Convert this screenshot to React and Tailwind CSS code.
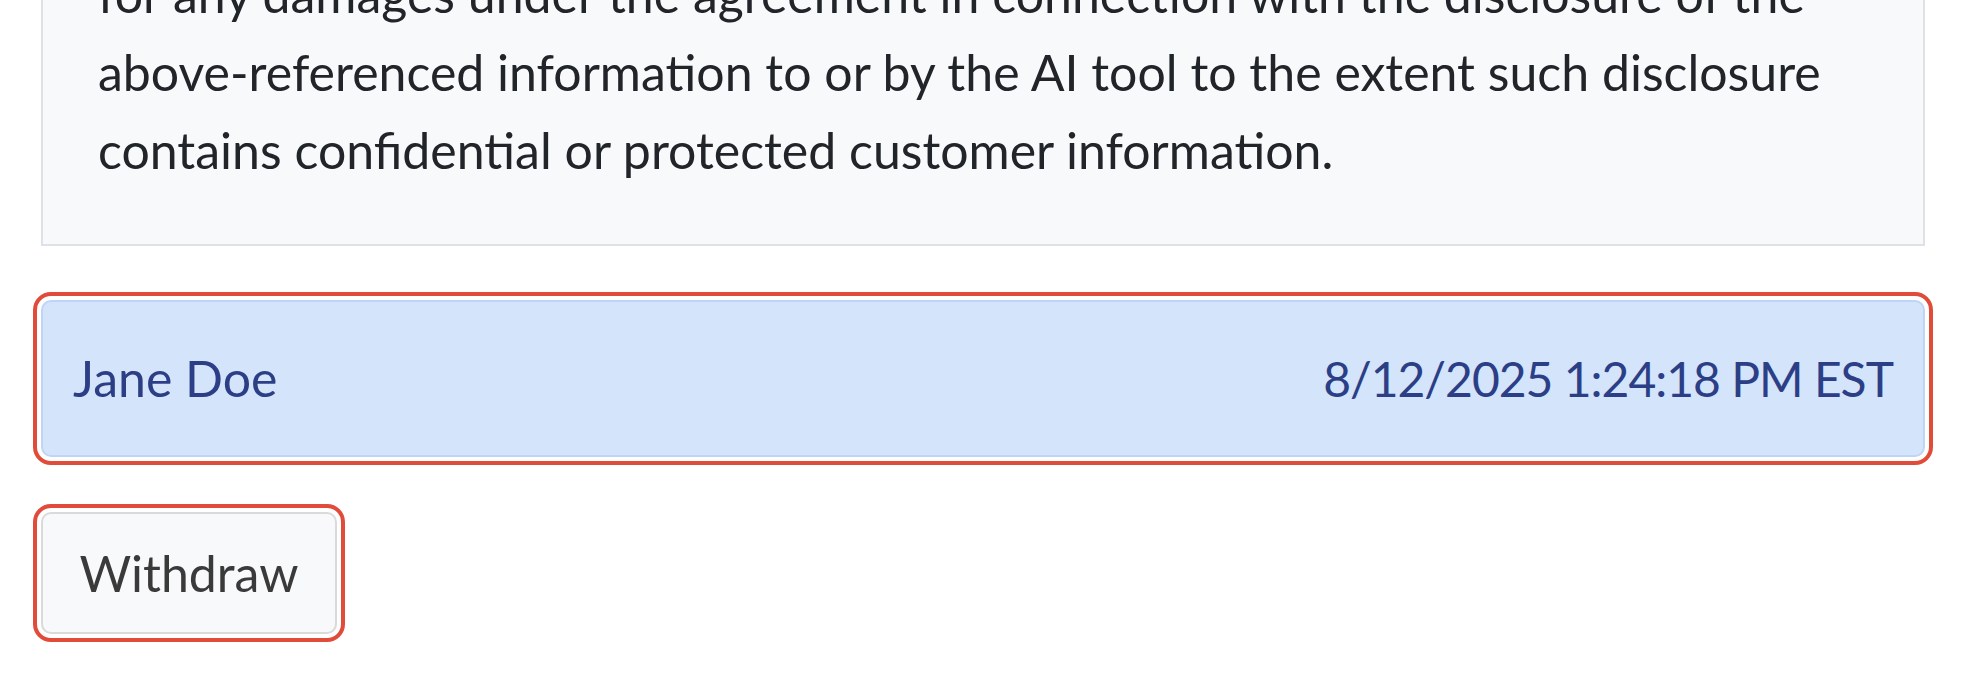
import React from 'react';

const lines = [
  'for any damages under the agreement in connection with the disclosure of the',
  'above-referenced information to or by the AI tool to the extent such disclosure',
  'contains confidential or protected customer information.',
];

const App = () => {
  return (
    <div className="min-h-screen overflow-hidden bg-white pl-[41px] pr-[40px] font-['Lato','Noto_Sans',sans-serif]">
      {/* Disclosure panel, scrolled so its top is above the fold */}
      <div className="-mt-[102px] border-2 border-[#dee2e6] bg-[#f8f9fa] px-[55px] pt-[55px] pb-[55px] text-[50px] leading-[78px] text-[#212529]">
        {lines.map((line) => (
          <div key={line} className="whitespace-nowrap">{line}</div>
        ))}
      </div>

      {/* Signature row */}
      <div className="mt-[54px] rounded-[10px] outline-4 outline-offset-4 outline-[#e04b3a]">
        <div className="flex h-[157px] items-center justify-between rounded-[10px] border-2 border-[#bfd5f7] bg-[#d3e4fb] pl-[30px] pr-[30px] text-[50px] text-[#2c3f86]">
          <span>Jane Doe</span>
          <span className="text-[48px] tracking-[-1px]">8/12/2025 1:24:18 PM EST</span>
        </div>
      </div>

      <button className="mt-[55px] flex h-[122px] w-[296px] items-center justify-center rounded-[10px] border-2 border-[#dadada] bg-[#f8f9fa] text-[50px] text-[#3a3a3a] outline-4 outline-offset-4 outline-[#e04b3a]">
        Withdraw
      </button>
    </div>
  );
};

export default App;
